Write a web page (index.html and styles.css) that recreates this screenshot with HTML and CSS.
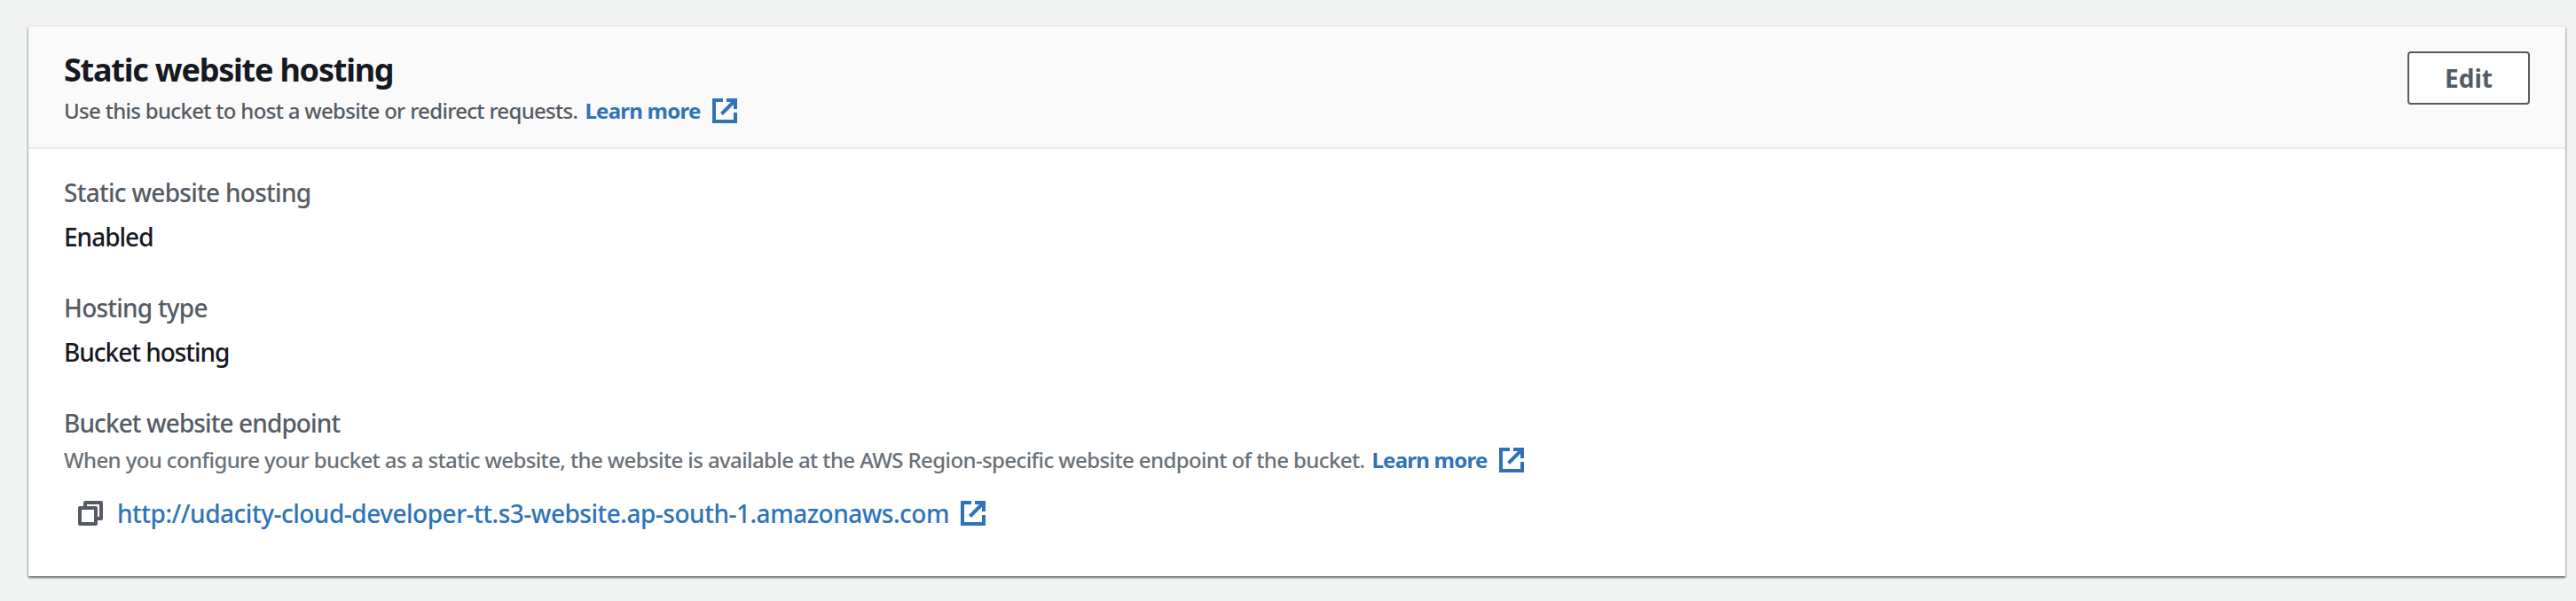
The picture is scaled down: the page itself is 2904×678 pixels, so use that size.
FILE: index.html
```html
<!DOCTYPE html>
<html lang="en">
<head>
<meta charset="utf-8">
<title>Static website hosting</title>
<link rel="stylesheet" href="styles.css">
</head>
<body>
<svg class="defs" aria-hidden="true">
  <symbol id="external" viewBox="0 0 28 28">
    <path d="M12 2H2v24h24V16M16 2h10v10M25 3 10.5 17.5" fill="none" stroke="currentColor" stroke-width="4"/>
  </symbol>
  <symbol id="copy" viewBox="0 0 28 28">
    <path d="M8 6V2h18v18h-4M2 8h18v18H2z" fill="none" stroke="currentColor" stroke-width="4" stroke-linejoin="round"/>
  </symbol>
</svg>
<section class="panel">
  <header class="panel-header">
    <div>
      <h2 class="title">Static website hosting</h2>
      <p class="hint"><span class="header-hint">Use this bucket to host a website or redirect requests.</span><a class="learn">Learn more</a><svg class="icon"><use href="#external"/></svg></p>
    </div>
    <button class="edit">Edit</button>
  </header>
  <dl class="fields">
    <div class="field">
      <dt class="label"><span class="t-static">Static website hosting</span></dt>
      <dd class="value"><span class="t-enabled">Enabled</span></dd>
    </div>
    <div class="field">
      <dt class="label"><span class="t-type">Hosting type</span></dt>
      <dd class="value"><span class="t-bucket">Bucket hosting</span></dd>
    </div>
    <div class="field">
      <dt class="label"><span class="t-endpoint">Bucket website endpoint</span></dt>
      <dd class="hint field-hint"><span class="endpoint-hint">When you configure your bucket as a static website, the website is available at the AWS Region-specific website endpoint of the bucket.</span><a class="learn">Learn more</a><svg class="icon"><use href="#external"/></svg></dd>
      <dd class="endpoint"><svg class="icon copy"><use href="#copy"/></svg><a class="url">http://udacity-cloud-developer-tt.s3-website.ap-south-1.amazonaws.com</a><svg class="icon"><use href="#external"/></svg></dd>
    </div>
  </dl>
</section>
</body>
</html>
```
FILE: styles.css
```css
* { box-sizing: border-box; }
body {
  margin: 0;
  padding: 30px 12px 28px 32px;
  background: #f2f3f3;
  color: #16191f;
  font-family: "Noto Sans", sans-serif;
  font-size: 28px;
  line-height: 44px;
  font-weight: 500;
}
h2, p, dl, dd { margin: 0; }
.defs { display: none; }
.panel {
  height: 620px;
  background: #fff;
  box-shadow: 0 2px 2px 0 rgba(0, 28, 36, .45), 1px 1px 2px 0 rgba(0, 28, 36, .2), -1px 1px 2px 0 rgba(0, 28, 36, .2), 0 -2px 0 0 #eaeded;
}
.panel-header {
  display: flex;
  justify-content: space-between;
  align-items: flex-start;
  height: 138px;
  padding: 26px 40px 0;
  background: #fafafa;
  border-bottom: 2px solid #eaeded;
}
.title { padding-top: 1px; font-size: 36px; font-weight: 700; letter-spacing: -1.22px; }
.hint {
  display: flex;
  align-items: center;
  margin-top: 6px;
  color: #545b64;
  font-size: 24px;
  line-height: 36px;
  white-space: nowrap;
}
.field-hint { margin-top: 2px; color: #687078; }
.header-hint { letter-spacing: -.69px; }
.endpoint-hint { letter-spacing: -.605px; }
.learn { margin-left: 8px; color: #2e73b8; font-weight: 700; letter-spacing: -.75px; }
.icon { flex: none; width: 28px; height: 28px; margin-left: 13px; color: #2e73b8; }
.edit {
  width: 138px;
  height: 60px;
  margin-top: 2px;
  padding: 0;
  background: #fff;
  border: 2px solid #545b64;
  border-radius: 4px;
  color: #545b64;
  font: 700 28px/44px "Noto Sans", sans-serif;
}
.fields { display: grid; gap: 36px; padding: 27px 40px 0; }
.label { color: #545b64; }
.value { margin-top: 6px; }
.t-static { letter-spacing: -.72px; }
.t-type { letter-spacing: -.78px; }
.t-enabled { letter-spacing: -1px; }
.t-bucket { letter-spacing: -1.03px; }
.t-endpoint { letter-spacing: -.9px; }
.endpoint { display: flex; align-items: center; margin-top: 20px; white-space: nowrap; }
.copy { margin-left: 16px; color: #545b64; }
.url { margin-left: 16px; color: #2e73b8; letter-spacing: -.49px; }
```
